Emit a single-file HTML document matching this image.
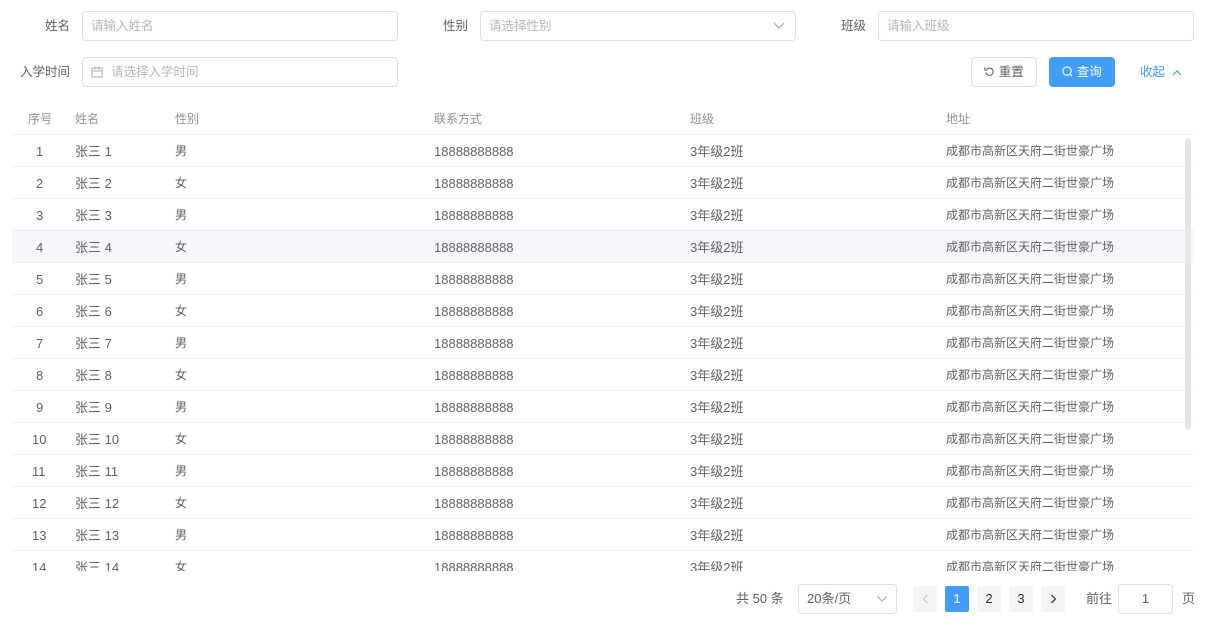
<!DOCTYPE html><html><head><meta charset="utf-8"><style>
*{box-sizing:border-box;margin:0;padding:0}
body{width:1205px;height:626px;background:#fff;font-family:"Liberation Sans","Noto Sans CJK SC",sans-serif;font-size:13px;color:#606266;position:relative;overflow:hidden}
.a{position:absolute}
.c{font-size:12px}
.lbl{position:absolute;text-align:right;width:70px;line-height:30px;color:#606266;font-size:12.5px}
.inp{position:absolute;height:30px;border:1px solid #dcdfe6;border-radius:4px;line-height:28px;padding-left:8px;color:#b4b7bd;font-size:12.5px}
.row{position:absolute;left:12px;width:1182px;height:32px;border-bottom:1px solid #ebeef5;line-height:33px}
.row span{position:absolute}
.pg{position:absolute;top:586px;width:24px;height:26px;background:#f4f4f5;border-radius:2px;text-align:center;line-height:26px;color:#303133}
</style></head><body>
<div class="lbl" style="left:0;top:11px">姓名</div>
<div class="inp" style="left:82px;top:11px;width:316px">请输入姓名</div>
<div class="lbl" style="left:398px;top:11px">性别</div>
<div class="inp" style="left:480px;top:11px;width:316px">请选择性别<svg class="a" style="right:10px;top:10px" width="12" height="8" viewBox="0 0 12 8"><path d="M1 1l5 5 5-5" fill="none" stroke="#a8abb2" stroke-width="1.2"/></svg></div>
<div class="lbl" style="left:796px;top:11px">班级</div>
<div class="inp" style="left:878px;top:11px;width:316px">请输入班级</div>
<div class="lbl" style="left:0;top:57px">入学时间</div>
<div class="inp" style="left:82px;top:57px;width:316px;padding-left:28px"><svg class="a" style="left:8px;top:8px" width="12" height="12" viewBox="0 0 12 12"><rect x="1" y="2" width="10" height="9" fill="none" stroke="#a8abb2"/><path d="M1 5h10M4 0.5v3M8 0.5v3" stroke="#a8abb2"/></svg>请选择入学时间</div>
<div class="a" style="left:971px;top:57px;width:66px;height:30px;border:1px solid #dcdfe6;border-radius:4px;line-height:28px;text-align:center;color:#606266;font-size:12.5px"><svg width="11" height="11" viewBox="0 0 12 12" style="vertical-align:-1px"><path d="M3 3.5A4 4 0 1 1 2 7" fill="none" stroke="#606266" stroke-width="1.2"/><path d="M1 1.5v3h3" fill="none" stroke="#606266" stroke-width="1.2"/></svg> 重置</div>
<div class="a" style="left:1049px;top:57px;width:66px;height:30px;background:#409eff;border-radius:4px;line-height:30px;text-align:center;color:#fff;font-size:12.5px"><svg width="11" height="11" viewBox="0 0 12 12" style="vertical-align:-1px"><circle cx="5.5" cy="5.5" r="4.5" fill="none" stroke="#fff" stroke-width="1.2"/><path d="M9 9l2 2" stroke="#fff" stroke-width="1.2"/></svg> 查询</div>
<div class="a" style="left:1140px;top:57px;line-height:30px;color:#409eff;font-size:12.5px">收起 &nbsp;<svg width="10" height="7" viewBox="0 0 10 7"><path d="M1 6l4-4 4 4" fill="none" stroke="#409eff" stroke-width="1.2"/></svg></div>
<div class="row c" style="top:103px;color:#909399;line-height:32px"><span style="left:16px">序号</span><span style="left:63px">姓名</span><span style="left:163px">性别</span><span style="left:422px">联系方式</span><span style="left:678px">班级</span><span style="left:934px">地址</span></div>
<div class="a" style="left:0;top:135px;width:1205px;height:436px;overflow:hidden">
<div id="rows"></div></div>
<div class="a" style="left:1185px;top:138px;width:6px;height:292px;background:#e4e5e7;border-radius:3px"></div>
<div class="a" style="left:736px;top:586px;line-height:26px">共 50 条</div>
<div class="a" style="left:798px;top:584px;width:99px;height:30px;border:1px solid #dcdfe6;border-radius:4px;line-height:28px;padding-left:8px">20条/页<svg class="a" style="right:8px;top:10px" width="12" height="8" viewBox="0 0 12 8"><path d="M1 1l5 5 5-5" fill="none" stroke="#a8abb2" stroke-width="1.2"/></svg></div>
<div class="pg" style="left:913px"><svg width="7" height="10" viewBox="0 0 7 10" style="vertical-align:-1px"><path d="M5.5 1L1.5 5l4 4" fill="none" stroke="#c0c4cc" stroke-width="1.2"/></svg></div>
<div class="pg" style="left:945px;background:#409eff;color:#fff">1</div>
<div class="pg" style="left:977px">2</div>
<div class="pg" style="left:1009px">3</div>
<div class="pg" style="left:1041px"><svg width="7" height="10" viewBox="0 0 7 10" style="vertical-align:-1px"><path d="M1.5 1l4 4-4 4" fill="none" stroke="#303133" stroke-width="1.2"/></svg></div>
<div class="a" style="left:1086px;top:586px;line-height:26px">前往</div>
<div class="a" style="left:1118px;top:584px;width:55px;height:30px;border:1px solid #dcdfe6;border-radius:4px;line-height:28px;text-align:center">1</div>
<div class="a" style="left:1182px;top:586px;line-height:26px">页</div>
<script>
var h='';for(var i=1;i<=14;i++){h+='<div class="row" style="top:'+((i-1)*32)+'px;'+(i==4?'background:#f5f7fa;':'')+'"><span style="left:'+(i<10?24:20)+'px">'+i+'</span><span style="left:63px">张三 '+i+'</span><span class="c" style="left:163px">'+(i%2?'男':'女')+'</span><span style="left:422px">18888888888</span><span style="left:678px">3年级2班</span><span class="c" style="left:934px">成都市高新区天府二街世豪广场</span></div>';}
document.getElementById('rows').innerHTML=h;
</script>
</body></html>
